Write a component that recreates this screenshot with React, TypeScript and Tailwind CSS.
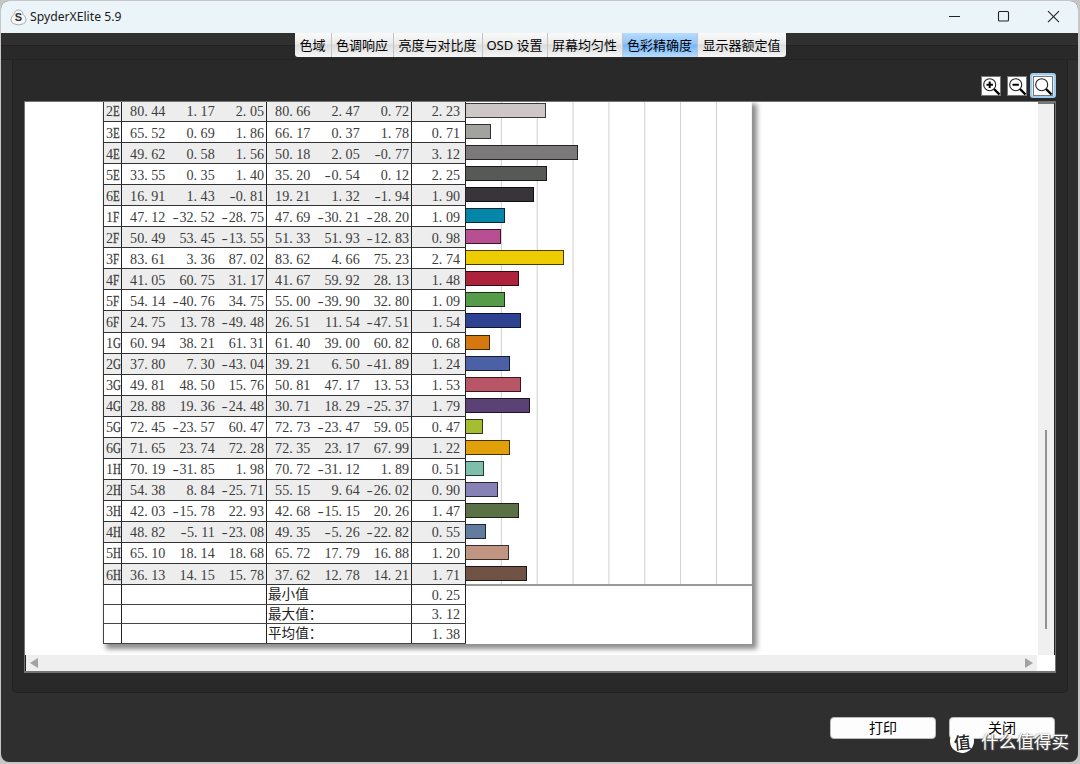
import clsx from "clsx";

type Patch = {
  id: string;
  target: string[];
  measured: string[];
  delta: string;
  color: string;
};

const patch = (id: string, target: string, measured: string, delta: string, color: string): Patch => ({
  id,
  target: target.split(" "),
  measured: measured.split(" "),
  delta,
  color,
});

const patches: Patch[] = [
  patch("2E", "80.44 1.17 2.05", "80.66 2.47 0.72", "2.23", "#cdc7c8"),
  patch("3E", "65.52 0.69 1.86", "66.17 0.37 1.78", "0.71", "#a2a29e"),
  patch("4E", "49.62 0.58 1.56", "50.18 2.05 -0.77", "3.12", "#7c797a"),
  patch("5E", "33.55 0.35 1.40", "35.20 -0.54 0.12", "2.25", "#575957"),
  patch("6E", "16.91 1.43 -0.81", "19.21 1.32 -1.94", "1.90", "#37353a"),
  patch("1F", "47.12 -32.52 -28.75", "47.69 -30.21 -28.20", "1.09", "#0585a8"),
  patch("2F", "50.49 53.45 -13.55", "51.33 51.93 -12.83", "0.98", "#b94f93"),
  patch("3F", "83.61 3.36 87.02", "83.62 4.66 75.23", "2.74", "#edcd00"),
  patch("4F", "41.05 60.75 31.17", "41.67 59.92 28.13", "1.48", "#ae233c"),
  patch("5F", "54.14 -40.76 34.75", "55.00 -39.90 32.80", "1.09", "#559b49"),
  patch("6F", "24.75 13.78 -49.48", "26.51 11.54 -47.51", "1.54", "#2d4290"),
  patch("1G", "60.94 38.21 61.31", "61.40 39.00 60.82", "0.68", "#d5780f"),
  patch("2G", "37.80 7.30 -43.04", "39.21 6.50 -41.89", "1.24", "#4c61a5"),
  patch("3G", "49.81 48.50 15.76", "50.81 47.17 13.53", "1.53", "#b85567"),
  patch("4G", "28.88 19.36 -24.48", "30.71 18.29 -25.37", "1.79", "#5a4374"),
  patch("5G", "72.45 -23.57 60.47", "72.73 -23.47 59.05", "0.47", "#a4bd32"),
  patch("6G", "71.65 23.74 72.28", "72.35 23.17 67.99", "1.22", "#e1a009"),
  patch("1H", "70.19 -31.85 1.98", "70.72 -31.12 1.89", "0.51", "#7dbfab"),
  patch("2H", "54.38 8.84 -25.71", "55.15 9.64 -26.02", "0.90", "#8682b5"),
  patch("3H", "42.03 -15.78 22.93", "42.68 -15.15 20.26", "1.47", "#5b7145"),
  patch("4H", "48.82 -5.11 -23.08", "49.35 -5.26 -22.82", "0.55", "#617c9f"),
  patch("5H", "65.10 18.14 18.68", "65.72 17.79 16.88", "1.20", "#c09683"),
  patch("6H", "36.13 14.15 15.78", "37.62 12.78 14.21", "1.71", "#705344"),
];

const summary = [
  { label: "最小值", value: "0.25" },
  { label: "最大值：", value: "3.12" },
  { label: "平均值：", value: "1.38" },
];

const tabs = [
  { label: "色域", width: "w-[37px]" },
  { label: "色调响应", width: "w-[62px]" },
  { label: "亮度与对比度", width: "w-[89px]" },
  { label: "OSD 设置", width: "w-[65px]" },
  { label: "屏幕均匀性", width: "w-[75px]" },
  { label: "色彩精确度", width: "w-[75px]", active: true },
  { label: "显示器额定值", width: "w-[88px]" },
];

// Delta E of 1.00 on the chart
const UNIT = 35.8;

// Every character takes one 7px cell
const Num = ({ value, className }: { value: string; className?: string }) => {
  const negative = value.startsWith("-");
  const [whole, fraction] = value.replace("-", "").split(".");
  return (
    <span className={clsx("shrink-0 whitespace-nowrap text-right", className)}>
      {negative && (
        <span className="inline-block h-0 scale-x-[1.5] font-['Liberation_Mono'] text-[12px] leading-[0]">-</span>
      )}
      {whole}
      <span className="tracking-[3.6px]">.</span>
      {fraction}
    </span>
  );
};

const Triplet = ({ values }: { values: string[] }) => (
  <div className="flex w-[145px] shrink-0 items-center justify-end border-r border-[#222] pt-px pr-[2px]">
    {values.map((value, i) => (
      <Num key={i} value={value} className="w-[49.3px]" />
    ))}
  </div>
);

const PatchRow = ({ item, shaded }: { item: Patch; shaded: boolean }) => (
  <div className="flex h-[21.05px]">
    <div
      className={clsx(
        "flex w-[363px] shrink-0 border-b border-l border-[#333]",
        shaded ? "bg-[#ededed]" : "bg-white"
      )}
    >
      <div className="flex w-[18px] shrink-0 items-center border-r border-[#222] pt-px pl-[2px]">
        {item.id[0]}
        <span className="inline-block w-[7px] origin-left scale-x-[.78] [-webkit-text-stroke:0.3px_#3c3c3c]">
          {item.id[1]}
        </span>
      </div>
      <Triplet values={item.target} />
      <Triplet values={item.measured} />
      <div className="flex w-[54px] shrink-0 items-center justify-end border-r border-[#222] pt-px pr-[5px]">
        <Num value={item.delta} />
      </div>
    </div>
    <div className="w-[286px] bg-[linear-gradient(to_right,transparent_35px,#cfcfcf_35px)] bg-[length:35.85px_100%] pt-[2px]">
      <div
        className="h-[15px] border border-l-0 border-black/70"
        style={{ width: Number(item.delta) * UNIT, backgroundColor: item.color }}
      />
    </div>
  </div>
);

const Report = () => (
  <div className="ml-[78px] w-[649px] bg-white font-['Liberation_Serif','Noto_Sans_CJK_SC',serif] text-[14.1px] leading-none text-[#3c3c3c] shadow-[4px_4px_5px_1px_rgba(0,0,0,0.45)]">
    <div className="-mt-px">
      {patches.map((item, i) => (
        <PatchRow key={item.id} item={item} shaded={i % 2 === 0} />
      ))}
    </div>
    <div className="flex">
      <div className="w-[363px] shrink-0">
        {summary.map((row) => (
          <div key={row.label} className="flex h-[19.6px] border-b border-l border-[#444]">
            <div className="w-[18px] shrink-0 border-r border-[#222]" />
            <div className="w-[145px] shrink-0 border-r border-[#222]" />
            <div className="flex w-[145px] shrink-0 items-center border-r border-[#222] pt-px pl-px text-[13.6px] text-[#222]">
              {row.label}
            </div>
            <div className="flex w-[54px] shrink-0 items-center justify-end border-r border-[#222] pt-px pr-[5px]">
              <Num value={row.value} />
            </div>
          </div>
        ))}
      </div>
      <div className="-mt-px w-[286px] border-t-2 border-[#999]" />
    </div>
  </div>
);

type ZoomKind = "in" | "out" | "fit";

const ZoomButton = ({ kind }: { kind: ZoomKind }) => (
  <button
    className={clsx(
      "flex h-[25px] w-[26px] items-center justify-center rounded-[3px]",
      kind === "fit" && "border-2 border-[#9fcbee] bg-[#d4eafb]"
    )}
  >
    <svg width="20" height="20" viewBox="0 0 20 20" className="shrink-0">
      <rect x="0.5" y="0.5" width="19" height="19" fill="#fff" stroke="#777" />
      <circle cx="8.7" cy="8.7" r="6" fill="none" stroke="#222" strokeWidth="1.1" />
      <path d="M13 13l5.5 5.5" stroke="#000" strokeWidth="2.4" />
      {kind !== "fit" && <path d="M5.5 8.7h6.4" stroke="#000" strokeWidth="2" />}
      {kind === "in" && <path d="M8.7 5.5v6.4" stroke="#000" strokeWidth="2" />}
    </svg>
  </button>
);

const TitleBar = () => (
  <div className="flex h-[32px] shrink-0 items-center bg-[#ebf4f9] pl-[9px]">
    <svg width="17" height="17" viewBox="0 0 17 17">
      <path
        d="M8.5 1C11 1 12.6 2.7 13 5.4C15.3 7.3 16.4 9.6 15.8 12C15.2 14.8 12.5 15 8.5 16C4.5 15 1.8 14.8 1.2 12C.6 9.6 1.7 7.3 4 5.4C4.4 2.7 6 1 8.5 1Z"
        fill="#f7f7f7"
        stroke="#aaa"
      />
      <text x="8.5" y="12.2" textAnchor="middle" fontSize="11" fontWeight="700" fontFamily="Liberation Sans" fill="#333">
        S
      </text>
    </svg>
    <span className="mt-px ml-[3px] text-[12.2px] text-[#1a1a1a]">SpyderXElite 5.9</span>
    <svg width="112" height="14" viewBox="0 0 112 14" className="mr-[18px] ml-auto" fill="none" stroke="#222" strokeWidth="1.1">
      <path d="M1 6.5h11" />
      <rect x="50.5" y="1.5" width="10" height="9.5" rx="1" />
      <path d="M100 1.2l11 11M111 1.2l-11 11" />
    </svg>
  </div>
);

export default function App() {
  return (
    <div className="relative h-[764px] w-[1080px] overflow-hidden bg-[#c6c6c6] pt-px pr-[2px] pb-[2px] pl-px font-['Noto_Sans','Noto_Sans_CJK_SC',sans-serif]">
      <div className="flex h-full flex-col overflow-hidden rounded-[8px] bg-[#2f2f2f]">
        <TitleBar />

        <div className="flex h-[27px] shrink-0 justify-center bg-[linear-gradient(#303030_12px,#222_12px,#222_13px,#292929_13px,#292929_26px,#222_26px)] pl-px">
          <div className="flex h-[24px] overflow-hidden rounded-b-[3px] bg-[linear-gradient(#fafafa,#ebebeb_45%,#dcdcdc_50%,#f6f6f6)]">
            {tabs.map((tab) => (
              <button
                key={tab.label}
                className={clsx(
                  "flex items-center justify-center border-r border-[#c4c4c4] text-[13px] leading-none whitespace-nowrap text-black last:border-r-0",
                  tab.width,
                  tab.active && "bg-[linear-gradient(#b9dcff,#90c4fb_45%,#74b5fb_50%,#b8dcfe)]"
                )}
              >
                {tab.label}
              </button>
            ))}
          </div>
        </div>

        <div className="mr-[10px] ml-[11px] flex h-[633px] shrink-0 flex-col rounded-b-[5px] border border-t-0 border-[#222] bg-[#292929] px-[11px]">
          <div className="flex h-[41px] shrink-0 items-start justify-end pt-[13px]">
            <ZoomButton kind="in" />
            <ZoomButton kind="out" />
            <ZoomButton kind="fit" />
          </div>

          <div className="flex h-[572px] flex-col border-t border-r border-b-2 border-l border-[#737373] bg-white">
            <div className="flex h-[553px] shrink-0">
              <div className="flex-1 overflow-hidden">
                <Report />
              </div>
              <div className="flex w-[17px] shrink-0 justify-center border-t-2 border-r border-t-[#777] border-r-[#222] bg-[#f0f0f0]">
                <div className="mt-[326px] h-[199px] w-[2px] bg-[#929292]" />
              </div>
            </div>
            <div className="flex flex-1">
              <div className="flex flex-1 items-center justify-between border-l border-[#222] bg-[#efefef] px-[4px]">
                <svg width="8" height="10" viewBox="0 0 8 10">
                  <path d="M8 0v10L0 5z" fill="#a3a3a3" />
                </svg>
                <svg width="8" height="10" viewBox="0 0 8 10">
                  <path d="M0 0v10l8-5z" fill="#a3a3a3" />
                </svg>
              </div>
              <div className="w-[18px] bg-white" />
            </div>
          </div>
        </div>

        <div className="mt-[24px] mr-[23px] flex justify-end gap-[13px] text-[14px] leading-none text-black">
          <button className="h-[22px] w-[106px] rounded-[4px] border border-[#bbb] bg-[#fdfdfd]">打印</button>
          <button className="h-[22px] w-[106px] rounded-[4px] border border-[#bbb] bg-[#fdfdfd]">关闭</button>
        </div>
      </div>

      {/* site watermark over the bottom right corner */}
      <div className="absolute top-[729px] left-[950px] flex items-center gap-[7px] font-['Noto_Sans_CJK_SC',sans-serif] leading-none whitespace-nowrap">
        <span className="flex size-[24px] -rotate-6 items-center justify-center rounded-full bg-white text-[17px] font-medium text-[#222]">
          值
        </span>
        <span className="text-[17.6px] text-white [text-shadow:1px_1px_1px_#555,0_0_2px_#777]">什么值得买</span>
      </div>
    </div>
  );
}
